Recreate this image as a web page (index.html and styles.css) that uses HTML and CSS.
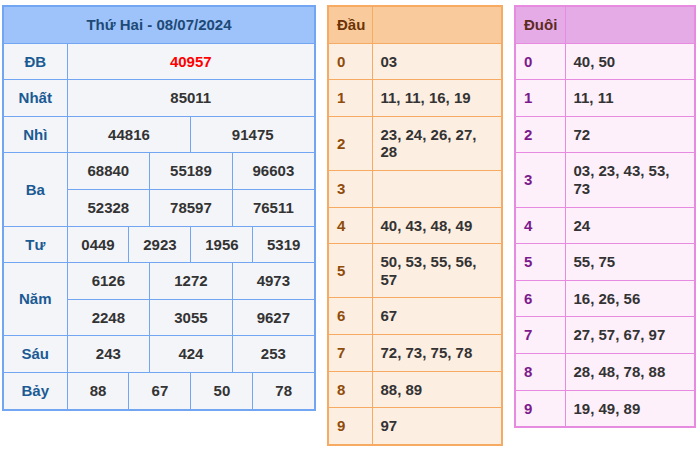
FILE: index.html
```html
<!DOCTYPE html>
<html lang="vi">
<head>
<meta charset="utf-8">
<title>XSMB 08/07/2024</title>
<link rel="stylesheet" href="styles.css">
</head>
<body>
<div class="wrap">
  <table class="kq">
    <colgroup>
      <col class="c-label">
      <col><col><col><col><col><col><col><col><col><col><col><col>
    </colgroup>
    <thead>
      <tr><th colspan="13" class="title">Thứ Hai - 08/07/2024</th></tr>
    </thead>
    <tbody>
      <tr><td class="lbl">ĐB</td><td colspan="12" class="db">40957</td></tr>
      <tr><td class="lbl">Nhất</td><td colspan="12">85011</td></tr>
      <tr><td class="lbl">Nhì</td><td colspan="6">44816</td><td colspan="6">91475</td></tr>
      <tr><td class="lbl" rowspan="2">Ba</td><td colspan="4">68840</td><td colspan="4">55189</td><td colspan="4">96603</td></tr>
      <tr><td colspan="4">52328</td><td colspan="4">78597</td><td colspan="4">76511</td></tr>
      <tr><td class="lbl">Tư</td><td colspan="3">0449</td><td colspan="3">2923</td><td colspan="3">1956</td><td colspan="3">5319</td></tr>
      <tr><td class="lbl" rowspan="2">Năm</td><td colspan="4">6126</td><td colspan="4">1272</td><td colspan="4">4973</td></tr>
      <tr><td colspan="4">2248</td><td colspan="4">3055</td><td colspan="4">9627</td></tr>
      <tr><td class="lbl">Sáu</td><td colspan="4">243</td><td colspan="4">424</td><td colspan="4">253</td></tr>
      <tr><td class="lbl">Bảy</td><td colspan="3">88</td><td colspan="3">67</td><td colspan="3">50</td><td colspan="3">78</td></tr>
    </tbody>
  </table>

  <table class="lt dau">
    <colgroup><col class="c-dau"><col></colgroup>
    <thead><tr><th>Đầu</th><th></th></tr></thead>
    <tbody>
      <tr><td class="k">0</td><td>03</td></tr>
      <tr><td class="k">1</td><td>11, 11, 16, 19</td></tr>
      <tr><td class="k">2</td><td>23, 24, 26, 27, 28</td></tr>
      <tr><td class="k">3</td><td></td></tr>
      <tr><td class="k">4</td><td>40, 43, 48, 49</td></tr>
      <tr><td class="k">5</td><td>50, 53, 55, 56, 57</td></tr>
      <tr><td class="k">6</td><td>67</td></tr>
      <tr><td class="k">7</td><td>72, 73, 75, 78</td></tr>
      <tr><td class="k">8</td><td>88, 89</td></tr>
      <tr><td class="k">9</td><td>97</td></tr>
    </tbody>
  </table>

  <table class="lt duoi">
    <colgroup><col class="c-duoi"><col></colgroup>
    <thead><tr><th>Đuôi</th><th></th></tr></thead>
    <tbody>
      <tr><td class="k">0</td><td>40, 50</td></tr>
      <tr><td class="k">1</td><td>11, 11</td></tr>
      <tr><td class="k">2</td><td>72</td></tr>
      <tr><td class="k">3</td><td>03, 23, 43, 53, 73</td></tr>
      <tr><td class="k">4</td><td>24</td></tr>
      <tr><td class="k">5</td><td>55, 75</td></tr>
      <tr><td class="k">6</td><td>16, 26, 56</td></tr>
      <tr><td class="k">7</td><td>27, 57, 67, 97</td></tr>
      <tr><td class="k">8</td><td>28, 48, 78, 88</td></tr>
      <tr><td class="k">9</td><td>19, 49, 89</td></tr>
    </tbody>
  </table>
</div>
</body>
</html>
```

FILE: styles.css
```css
html, body {
  margin: 0;
  padding: 0;
  background: #ffffff;
}

body {
  font-family: "Liberation Sans", Arial, sans-serif;
  font-size: 15px;
  font-weight: bold;
  color: #333333;
}

.wrap {
  display: flex;
  align-items: flex-start;
  gap: 11px;
  padding: 5px 2px;
}

table {
  border-collapse: collapse;
  table-layout: fixed;
}

th, td {
  line-height: 17.6px;
  padding: 9px 8px;
}

/* Results table */
.kq {
  width: 314px;
  border: 2px solid #72a5f2;
  background: #f3f5f9;
}

.kq .c-label {
  width: 64px;
}

.kq th, .kq td {
  border: 1px solid #72a5f2;
  text-align: center;
  padding-left: 0;
  padding-right: 0;
}

.kq .title {
  background: #9ec3fb;
  color: #1d4a76;
  font-weight: bold;
}

.kq .lbl {
  color: #1b5a93;
}

.kq .db {
  color: #ff0000;
}

/* Loto head/tail tables */
.lt td, .lt th {
  text-align: left;
}

.dau {
  width: 176px;
  border: 2px solid #f6aa62;
  background: #fdeee2;
}

.dau .c-dau {
  width: 44px;
}

.dau th, .dau td {
  border: 1px solid #f6aa62;
}

.dau th {
  background: #f9ca9c;
  color: #6a3405;
  font-weight: bold;
}

.dau .k {
  color: #8f4c0a;
}

.duoi {
  width: 182px;
  border: 2px solid #e68be0;
  background: #fdf0fb;
}

.duoi .c-duoi {
  width: 50px;
}

.duoi th, .duoi td {
  border: 1px solid #e68be0;
}

.duoi th {
  background: #e5abe6;
  color: #5c2a1e;
  font-weight: bold;
}

.duoi .k {
  color: #7c1a8c;
}
```
